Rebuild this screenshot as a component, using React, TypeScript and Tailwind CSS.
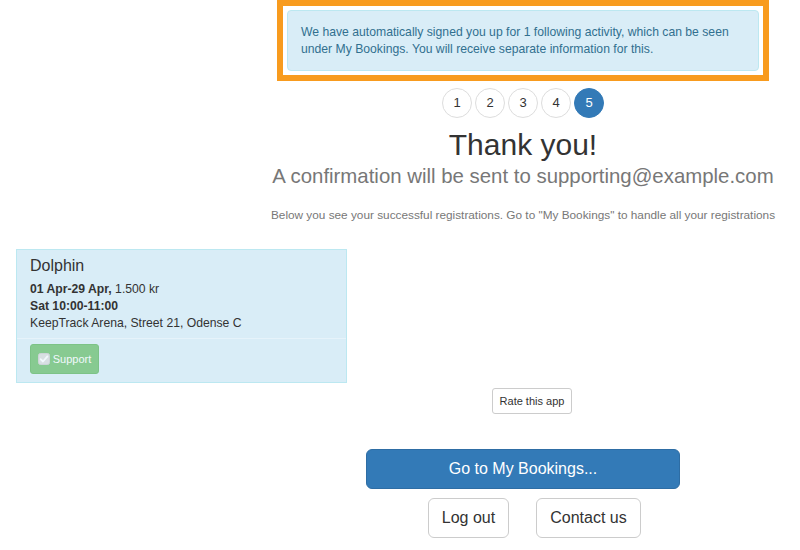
import React from "react";

const font = { fontFamily: '"Liberation Sans", Arial, sans-serif' };

function CheckIcon() {
  return (
    <svg width="12" height="12" viewBox="0 0 12 12" className="mr-[3px]">
      <rect x="0.5" y="0.5" width="11" height="11" rx="2" fill="#d8d8d8" stroke="#c8c8c8" />
      <path d="M2.6 6.2 L5 8.5 L9.4 3.4" fill="none" stroke="#ffffff" strokeWidth="1.8" strokeLinecap="round" strokeLinejoin="round" />
    </svg>
  );
}

export default function App() {
  const steps = [1, 2, 3, 4, 5];
  return (
    <div className="w-[800px] h-[550px] bg-white overflow-hidden text-[#333]" style={font}>
      {/* top section */}
      <div className="ml-[266px] w-[514px] flex flex-col items-center">
        <div className="w-[492px] border-[#f89b1e] border-x-[6px] border-b-[6px] border-t-[6px] p-[4px] bg-white">
          <div className="bg-[#d9edf7] border border-[#bce8f1] rounded-[4px] pl-[13px] pr-[8px] pt-[13px] pb-[12px] text-[12.2px] leading-[17px] text-[#31708f]">
            We have automatically signed you up for 1 following activity, which can be seen under My Bookings. You will receive separate information for this.
          </div>
        </div>
        <div className="mt-[7px] flex gap-[3px]">
          {steps.map((s) => (
            <div
              key={s}
              className={
                s === 5
                  ? "w-[30px] h-[30px] rounded-full bg-[#337ab7] border border-[#337ab7] text-white flex items-center justify-center text-[13px]"
                  : "w-[30px] h-[30px] rounded-full bg-white border border-[#dddddd] text-[#333] flex items-center justify-center text-[13px]"
              }
            >
              {s}
            </div>
          ))}
        </div>
        <div className="mt-[9px] text-[30px] leading-[36px] text-[#333]">Thank you!</div>
        <div className="mt-[1px] text-[20.4px] leading-[24px] text-[#777]">
          A confirmation will be sent to supporting@example.com
        </div>
        <div className="mt-[20px] text-[11.8px] leading-[15px] text-[#777] whitespace-nowrap">
          Below you see your successful registrations. Go to "My Bookings" to handle all your registrations
        </div>
      </div>

      {/* card */}
      <div className="mt-[26px] ml-[16px] w-[331px] h-[134px] bg-[#d9edf7] border border-[#bce8f1] flex flex-col">
        <div className="px-[13px] pt-[6px] pb-[6px]">
          <div className="text-[16px] leading-[20px] text-[#333]">Dolphin</div>
          <div className="mt-[5px] text-[12.2px] leading-[17px]">
            <span className="font-bold">01 Apr-29 Apr,</span> 1.500 kr
          </div>
          <div className="text-[12.2px] leading-[17px] font-bold">Sat 10:00-11:00</div>
          <div className="text-[12.2px] leading-[17px]">KeepTrack Arena, Street 21, Odense C</div>
        </div>
        <div className="border-t border-[#e6f3fa] px-[13px] pt-[5px]">
          <div className="w-[69px] h-[30px] rounded-[3px] bg-[#5cb85c] border border-[#4cae4c] opacity-65 flex items-center justify-center text-white text-[11px]">
            <CheckIcon />
            Support
          </div>
        </div>
      </div>

      {/* bottom actions */}
      <div className="mt-[5px] ml-[366px] w-[314px] flex flex-col">
        <div className="pl-[126px]">
          <div className="w-[80px] h-[26px] border border-[#cccccc] rounded-[3px] bg-white flex items-center justify-center text-[11px] text-[#333]">
            Rate this app
          </div>
        </div>
        <div className="mt-[35px] w-[314px] h-[40px] rounded-[6px] bg-[#337ab7] border border-[#2e6da4] flex items-center justify-center text-white text-[16px]">
          Go to My Bookings...
        </div>
        <div className="mt-[9px] pl-[62px] flex gap-[27px]">
          <div className="w-[81px] h-[40px] rounded-[6px] bg-white border border-[#cccccc] flex items-center justify-center text-[16px] text-[#333]">
            Log out
          </div>
          <div className="w-[105px] h-[40px] rounded-[6px] bg-white border border-[#cccccc] flex items-center justify-center text-[16px] text-[#333]">
            Contact us
          </div>
        </div>
      </div>
    </div>
  );
}
